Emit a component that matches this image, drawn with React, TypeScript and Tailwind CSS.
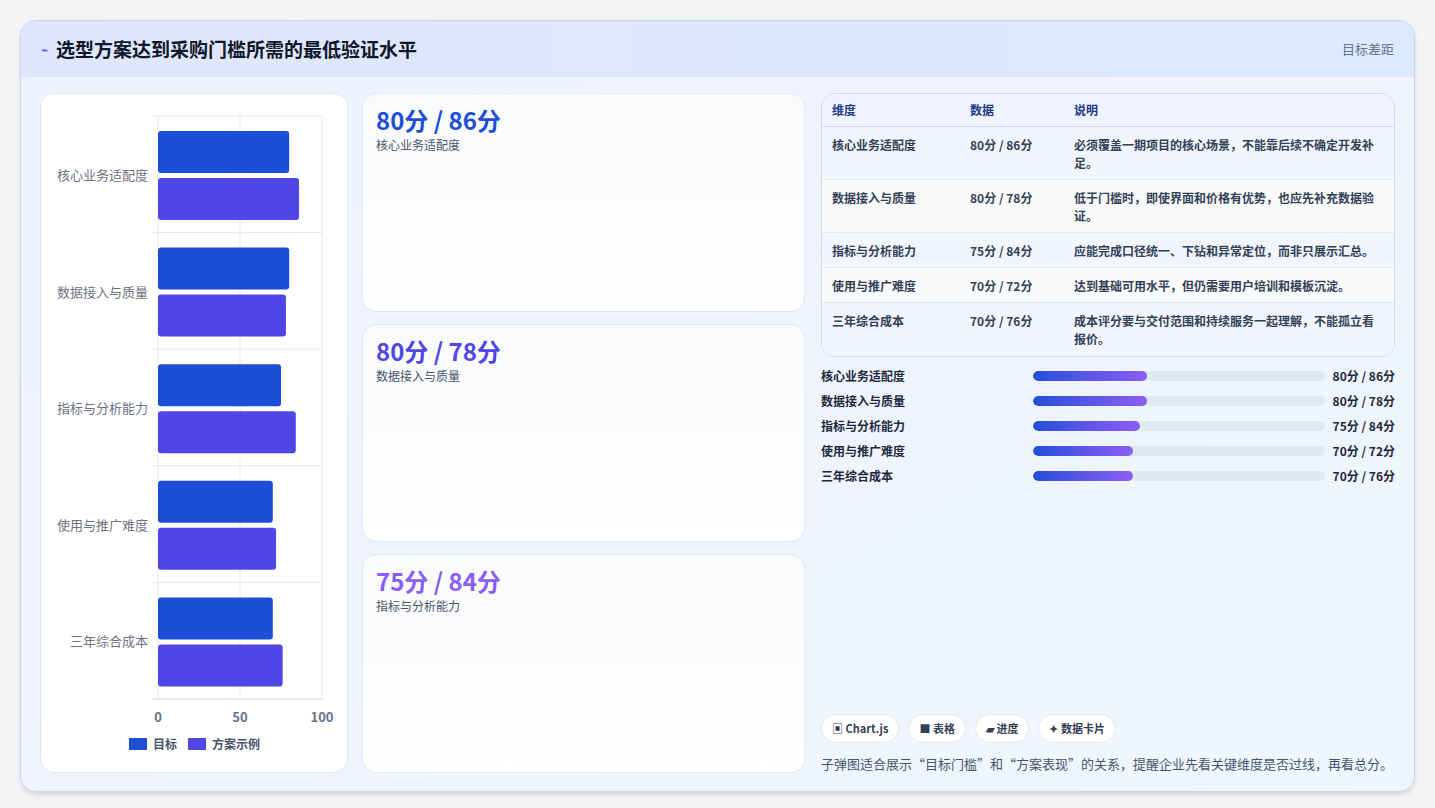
import React from "react";

const cats = ["核心业务适配度", "数据接入与质量", "指标与分析能力", "使用与推广难度", "三年综合成本"];
const target = [80, 80, 75, 70, 70];
const actual = [86, 78, 84, 72, 76];
const rows = [
  ["核心业务适配度", "80分 / 86分", "必须覆盖一期项目的核心场景，不能靠后续不确定开发补足。", "h-[53px]"],
  ["数据接入与质量", "80分 / 78分", "低于门槛时，即使界面和价格有优势，也应先补充数据验证。", "h-[53px]"],
  ["指标与分析能力", "75分 / 84分", "应能完成口径统一、下钻和异常定位，而非只展示汇总。", "h-[35px]"],
  ["使用与推广难度", "70分 / 72分", "达到基础可用水平，但仍需要用户培训和模板沉淀。", "h-[35px]"],
  ["三年综合成本", "70分 / 76分", "成本评分要与交付范围和持续服务一起理解，不能孤立看报价。", "h-[53px]"],
];
const font = { fontFamily: '"Noto Sans CJK SC", "Noto Sans", sans-serif' };

function Chart() {
  const x0 = 117, sc = 1.64, top = 22, rh = 116.6;
  return (
    <svg width="307" height="678" className="block" style={font}>
      {[0, 50, 100].map((v) => (
        <line key={v} x1={x0 + v * sc} x2={x0 + v * sc} y1={top} y2={605} stroke="#e2e8f0" />
      ))}
      {cats.map((_, i) => (
        <line key={i} x1={x0 - 6} x2={x0 + 164} y1={top + i * rh} y2={top + i * rh} stroke="#e5e7eb" />
      ))}
      <line x1={x0 - 6} x2={x0 + 164} y1={605} y2={605} stroke="#cbd5e1" />
      {cats.map((c, i) => {
        const y = top + i * rh;
        return (
          <g key={c}>
            <rect x={x0} y={y + 15} width={target[i] * sc} height={42} rx={3} fill="#1d4ed8" />
            <rect x={x0} y={y + 62} width={actual[i] * sc} height={42} rx={3} fill="#4f46e5" />
            <text x={x0 - 10} y={y + 64} textAnchor="end" fontSize="13" fill="#6b7280">{c}</text>
          </g>
        );
      })}
      {[0, 50, 100].map((v) => (
        <text key={v} x={x0 + v * sc} y={628} textAnchor="middle" fontSize="13" fontWeight="bold" fill="#64748b">{v}</text>
      ))}
      <rect x={88} y={644} width={18} height={12} fill="#1d4ed8" />
      <text x={112} y={655} fontSize="12" fontWeight="bold" fill="#475569">目标</text>
      <rect x={147} y={644} width={18} height={12} fill="#4f46e5" />
      <text x={171} y={655} fontSize="12" fontWeight="bold" fill="#475569">方案示例</text>
    </svg>
  );
}

export default function App() {
  return (
    <div className="w-[1435px] h-[808px] bg-[#f3f4f6] p-[20px]" style={font}>
      <div className="h-[772px] rounded-[16px] border border-[#c7d2fe] bg-gradient-to-br from-[#eef2ff] to-[#eff6ff] overflow-hidden flex flex-col shadow-md">
        <div className="h-[56px] shrink-0 bg-gradient-to-r from-[#dfe6fd] to-[#dde9fd] flex items-center justify-between px-[20px]">
          <div className="flex items-center gap-[8px]">
            <span className="text-[#4f46e5] text-[12px]">⌁</span>
            <span className="text-[19px] font-bold text-[#0f172a]">选型方案达到采购门槛所需的最低验证水平</span>
          </div>
          <span className="text-[13px] text-[#64748b]">目标差距</span>
        </div>
        <div className="flex-1 flex gap-[14px] px-[19px] pt-[16px] pb-[19px]">
          <div className="w-[308px] bg-white rounded-[14px] border border-[#e5e7eb]">
            <Chart />
          </div>
          <div className="w-[443px] flex flex-col gap-[12px]">
            {[
              ["80分 / 86分", "核心业务适配度", "text-[#1d4ed8]"],
              ["80分 / 78分", "数据接入与质量", "text-[#4f46e5]"],
              ["75分 / 84分", "指标与分析能力", "text-[#8b5cf6]"],
            ].map(([v, l, c]) => (
              <div key={l} className="flex-1 rounded-[14px] border border-[#e0e7ff] bg-gradient-to-b from-[#f8fafc] to-white px-[13px] pt-[10px]">
                <div className={`text-[24px] font-bold leading-[32px] ${c}`}>{v}</div>
                <div className="text-[12px] text-[#475569]">{l}</div>
              </div>
            ))}
          </div>
          <div className="flex-1 ml-[2px] flex flex-col">
            <div className="rounded-[14px] border border-[#d1d9e6] overflow-hidden bg-white">
              <div className="h-[33px] flex items-center bg-[#eef3ff] border-b border-[#d1d9e6] text-[12px] font-bold text-[#1e3a8a]">
                <div className="w-[148px] pl-[10px]">维度</div>
                <div className="w-[104px]">数据</div>
                <div className="flex-1">说明</div>
              </div>
              {rows.map(([a, b, c, h], i) => (
                <div key={a} className={`${h} flex pt-[9px] text-[12px] font-semibold text-[#334155] leading-[18px] ${i < 4 ? "border-b border-[#e2e8f0]" : ""} ${i % 2 === 0 ? "bg-[#f1f5fe]" : "bg-[#f8fafc]"}`}>
                  <div className="w-[148px] pl-[10px]">{a}</div>
                  <div className="w-[104px]">{b}</div>
                  <div className="flex-1 pr-[14px]">{c}</div>
                </div>
              ))}
            </div>
            <div className="mt-[10px] flex flex-col gap-[7px]">
              {cats.map((c, i) => (
                <div key={c} className="h-[18px] flex items-center text-[12px] font-semibold text-[#1e293b]">
                  <div className="w-[212px]">{c}</div>
                  <div className="w-[292px] h-[10px] rounded-full bg-[#e2e8f0] overflow-hidden">
                    <div className="h-full rounded-full bg-gradient-to-r from-[#1d4ed8] to-[#8b5cf6]" style={{ width: `${(target[i] * 1.43 / 292) * 100}%` }} />
                  </div>
                  <div className="flex-1 text-right font-bold">{target[i]}分 / {actual[i]}分</div>
                </div>
              ))}
            </div>
            <div className="flex-1" />
            <div className="flex gap-[9px]">
              {["▣ Chart.js", "■ 表格", "▰ 进度", "✦ 数据卡片"].map((t) => (
                <div key={t} className="h-[29px] px-[10px] rounded-full bg-white border border-[#e5e7eb] flex items-center text-[11px] font-bold text-[#334155]">{t}</div>
              ))}
            </div>
            <div className="mt-[11px] text-[13px] text-[#475569]">子弹图适合展示“目标门槛”和“方案表现”的关系，提醒企业先看关键维度是否过线，再看总分。</div>
          </div>
        </div>
      </div>
    </div>
  );
}
